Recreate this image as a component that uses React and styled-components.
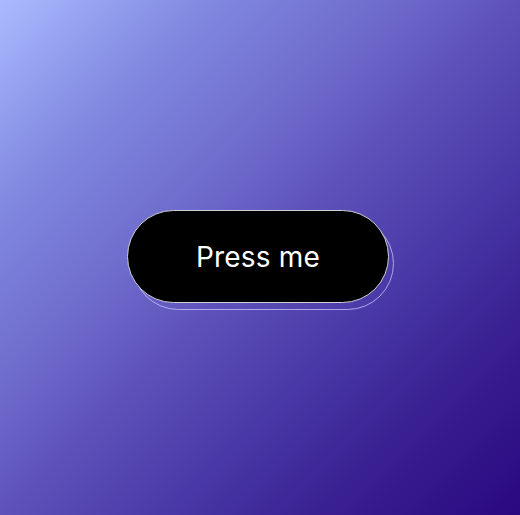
import React from 'react';
import styled, { createGlobalStyle } from 'styled-components';

const GlobalStyle = createGlobalStyle`
  html, body {
    margin: 0;
    padding: 0;
  }
  body {
    font-family: Inter, "Noto Sans", sans-serif;
  }
`

const Stage = styled.div`
  width: 100vw;
  height: 100vh;
  display: flex;
  align-items: center;
  justify-content: center;
  background: linear-gradient(
    135deg,
    #abbaff 0%,
    #8189e0 20%,
    #6e6bcc 38%,
    #5e52ba 50%,
    #4a3aa8 65%,
    #3a2192 80%,
    #2a0880 100%
  );
  padding-right: 4px;
  padding-bottom: 2px;
  box-sizing: border-box;
`

const ButtonWrap = styled.div`
  position: relative;
  width: 262px;
  height: 93px;
`

// offset outline sitting behind the pill
const Echo = styled.span`
  position: absolute;
  inset: 0;
  border-radius: 47px;
  border: 1px solid rgba(205, 200, 255, 0.75);
  transform: translate(5px, 7px);
`

const Button = styled.button`
  position: relative;
  z-index: 1;
  width: 100%;
  height: 100%;
  border-radius: 47px;
  border: 1px solid #cfcfd8;
  background: #000;
  color: #fff;
  font-family: Inter, "Noto Sans", sans-serif;
  font-size: 28px;
  font-weight: 400;
  letter-spacing: 0.2px;
  cursor: pointer;
`

export default function App() {
  return (
    <>
      <GlobalStyle />
      <Stage>
        <ButtonWrap>
          <Echo />
          <Button>Press me</Button>
        </ButtonWrap>
      </Stage>
    </>
  )
}
